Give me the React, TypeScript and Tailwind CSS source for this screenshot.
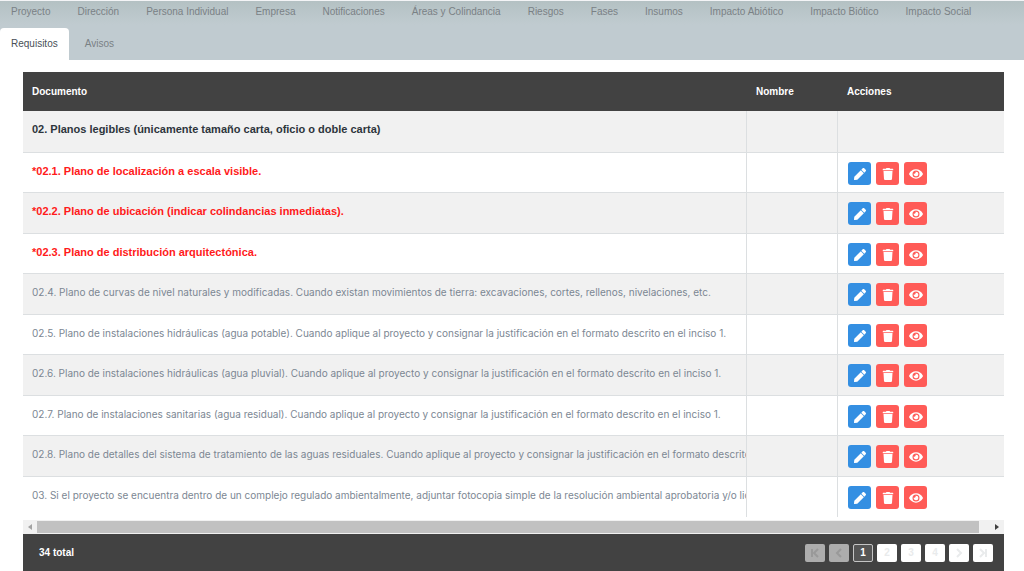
import clsx from "clsx";
import { FaEye, FaPen, FaTrash } from "react-icons/fa";

const TABS = [
  "Proyecto",
  "Dirección",
  "Persona Individual",
  "Empresa",
  "Notificaciones",
  "Áreas y Colindancia",
  "Riesgos",
  "Fases",
  "Insumos",
  "Impacto Abiótico",
  "Impacto Biótico",
  "Impacto Social",
  "Requisitos",
  "Avisos",
];

type Row = { text: string; kind: "title" | "required" | "optional" };

const ROWS: Row[] = [
  { kind: "title",    text: "02. Planos legibles (únicamente tamaño carta, oficio o doble carta)" },
  { kind: "required", text: "*02.1. Plano de localización a escala visible." },
  { kind: "required", text: "*02.2. Plano de ubicación (indicar colindancias inmediatas)." },
  { kind: "required", text: "*02.3. Plano de distribución arquitectónica." },
  { kind: "optional", text: "02.4. Plano de curvas de nivel naturales y modificadas. Cuando existan movimientos de tierra: excavaciones, cortes, rellenos, nivelaciones, etc." },
  { kind: "optional", text: "02.5. Plano de instalaciones hidráulicas (agua potable). Cuando aplique al proyecto y consignar la justificación en el formato descrito en el inciso 1." },
  { kind: "optional", text: "02.6. Plano de instalaciones hidráulicas (agua pluvial). Cuando aplique al proyecto y consignar la justificación en el formato descrito en el inciso 1." },
  { kind: "optional", text: "02.7. Plano de instalaciones sanitarias (agua residual). Cuando aplique al proyecto y consignar la justificación en el formato descrito en el inciso 1." },
  { kind: "optional", text: "02.8. Plano de detalles del sistema de tratamiento de las aguas residuales. Cuando aplique al proyecto y consignar la justificación en el formato descrito" },
  { kind: "optional", text: "03. Si el proyecto se encuentra dentro de un complejo regulado ambientalmente, adjuntar fotocopia simple de la resolución ambiental aprobatoria y/o lice" },
];

function Tabs() {
  return (
    <nav className="h-15 overflow-hidden border-t border-gray-100 bg-[#c0cbd0] bg-linear-to-b from-[#b4c1c3] to-[#c0cbd0] to-40% flex flex-wrap content-end">
      {TABS.map((tab) => (
        <a
          key={tab}
          href="#"
          className={clsx(
            "h-8 mr-[5px] px-[11px] pb-[2px] flex items-center rounded-t whitespace-nowrap",
            tab === "Requisitos" ? "bg-white text-[#495057]" : "text-[#7a8185]",
          )}
        >
          {tab}
        </a>
      ))}
    </nav>
  );
}

function Actions() {
  const base = "size-[23px] rounded-[3px] flex items-center justify-center text-white";
  return (
    <div className="flex gap-[5px]">
      <button type="button" aria-label="Editar" className={clsx(base, "bg-[#348fe2]")}>
        <FaPen size={12} />
      </button>
      <button type="button" aria-label="Eliminar" className={clsx(base, "bg-[#ff5b57]")}>
        <FaTrash size={12} />
      </button>
      <button type="button" aria-label="Ver" className={clsx(base, "bg-[#ff5b57]")}>
        <FaEye size={14} />
      </button>
    </div>
  );
}

function DocumentTable() {
  return (
    <table className="w-full table-fixed border-separate border-spacing-0 text-left">
      <colgroup>
        <col />
        <col className="w-[91px]" />
        <col className="w-[166px]" />
      </colgroup>
      <thead>
        <tr className="h-[39px] bg-[#424242] text-white">
          <th className="px-[9px] font-bold">Documento</th>
          <th className="px-[9px] font-bold">Nombre</th>
          <th className="px-[9px] font-bold">Acciones</th>
        </tr>
      </thead>
      <tbody className="[&>tr>td]:border-b [&>tr>td]:border-[#dcdfe1] [&>tr:last-child>td]:border-b-0">
        {ROWS.map(({ text, kind }) => (
          <tr
            key={text}
            className={clsx(
              "odd:bg-[#f1f1f1] even:bg-white align-top",
              kind === "title" ? "h-[42px]" : "h-10 odd:h-[41px]",
            )}
          >
            <td
              className={clsx(
                "pl-[9px] pt-[10px] border-r overflow-hidden whitespace-nowrap leading-4",
                kind === "title" && "font-bold text-[11px] text-[#2d353c]",
                kind === "required" && "font-bold text-[11px] text-[#ff1a1a]",
                kind === "optional" && "font-[Inter,Arial,sans-serif] text-[#7c8793]",
              )}
            >
              {text}
            </td>
            <td className="border-r" />
            <td className="px-[10px] pt-[9px]">{kind !== "title" && <Actions />}</td>
          </tr>
        ))}
      </tbody>
    </table>
  );
}

function ScrollBar() {
  return (
    <div className="mt-[3px] h-[14px] bg-[#f1f1f1] flex items-center">
      <button type="button" aria-label="Desplazar a la izquierda" className="w-[14px] flex justify-center text-[#a3a3a3]">
        <svg width="4" height="6" viewBox="0 0 4 6" fill="currentColor">
          <path d="M4 0v6L0 3z" />
        </svg>
      </button>
      <div className="grow h-3 bg-[#c1c1c1]" />
      <button type="button" aria-label="Desplazar a la derecha" className="w-[25px] pl-[11px] flex justify-center text-[#404040]">
        <svg width="4" height="6" viewBox="0 0 4 6" fill="currentColor">
          <path d="M0 0v6l4-3z" />
        </svg>
      </button>
    </div>
  );
}

function PagerIcon({ d }: { d: string }) {
  return (
    <svg width="12" height="12" viewBox="0 0 12 12" fill="none" stroke="currentColor" strokeWidth="2">
      <path d={d} />
    </svg>
  );
}

function Pager() {
  const base = "w-5 h-[18px] rounded-[2px] flex items-center justify-center font-bold";
  const page = "bg-white text-[#e9ebec]";
  const disabled = "bg-[#adadad] text-[#999999]";
  return (
    <div className="flex gap-1">
      <button type="button" disabled aria-label="Primera página" className={clsx(base, disabled)}>
        <PagerIcon d="M3 2v8M9 2L5 6l4 4" />
      </button>
      <button type="button" disabled aria-label="Página anterior" className={clsx(base, disabled)}>
        <PagerIcon d="M8 2L4 6l4 4" />
      </button>
      <button type="button" aria-current="page" className={clsx(base, "border border-[#c4c4c4] bg-[#555555] text-white")}>
        1
      </button>
      {[2, 3, 4].map((n) => (
        <button key={n} type="button" className={clsx(base, page)}>
          {n}
        </button>
      ))}
      <button type="button" aria-label="Página siguiente" className={clsx(base, page)}>
        <PagerIcon d="M4 2l4 4-4 4" />
      </button>
      <button type="button" aria-label="Última página" className={clsx(base, page)}>
        <PagerIcon d="M3 2l4 4-4 4M9 2v8" />
      </button>
    </div>
  );
}

export default function App() {
  return (
    <div className="bg-white font-['Liberation_Sans',Arial,sans-serif] text-[10px]">
      <Tabs />
      <main className="mt-3 ml-[23px] mr-5">
        <DocumentTable />
        <ScrollBar />
        <footer className="h-[37px] pl-4 pr-[11px] bg-[#424242] text-white flex items-center justify-between">
          <span className="font-bold">34 total</span>
          <Pager />
        </footer>
      </main>
    </div>
  );
}
